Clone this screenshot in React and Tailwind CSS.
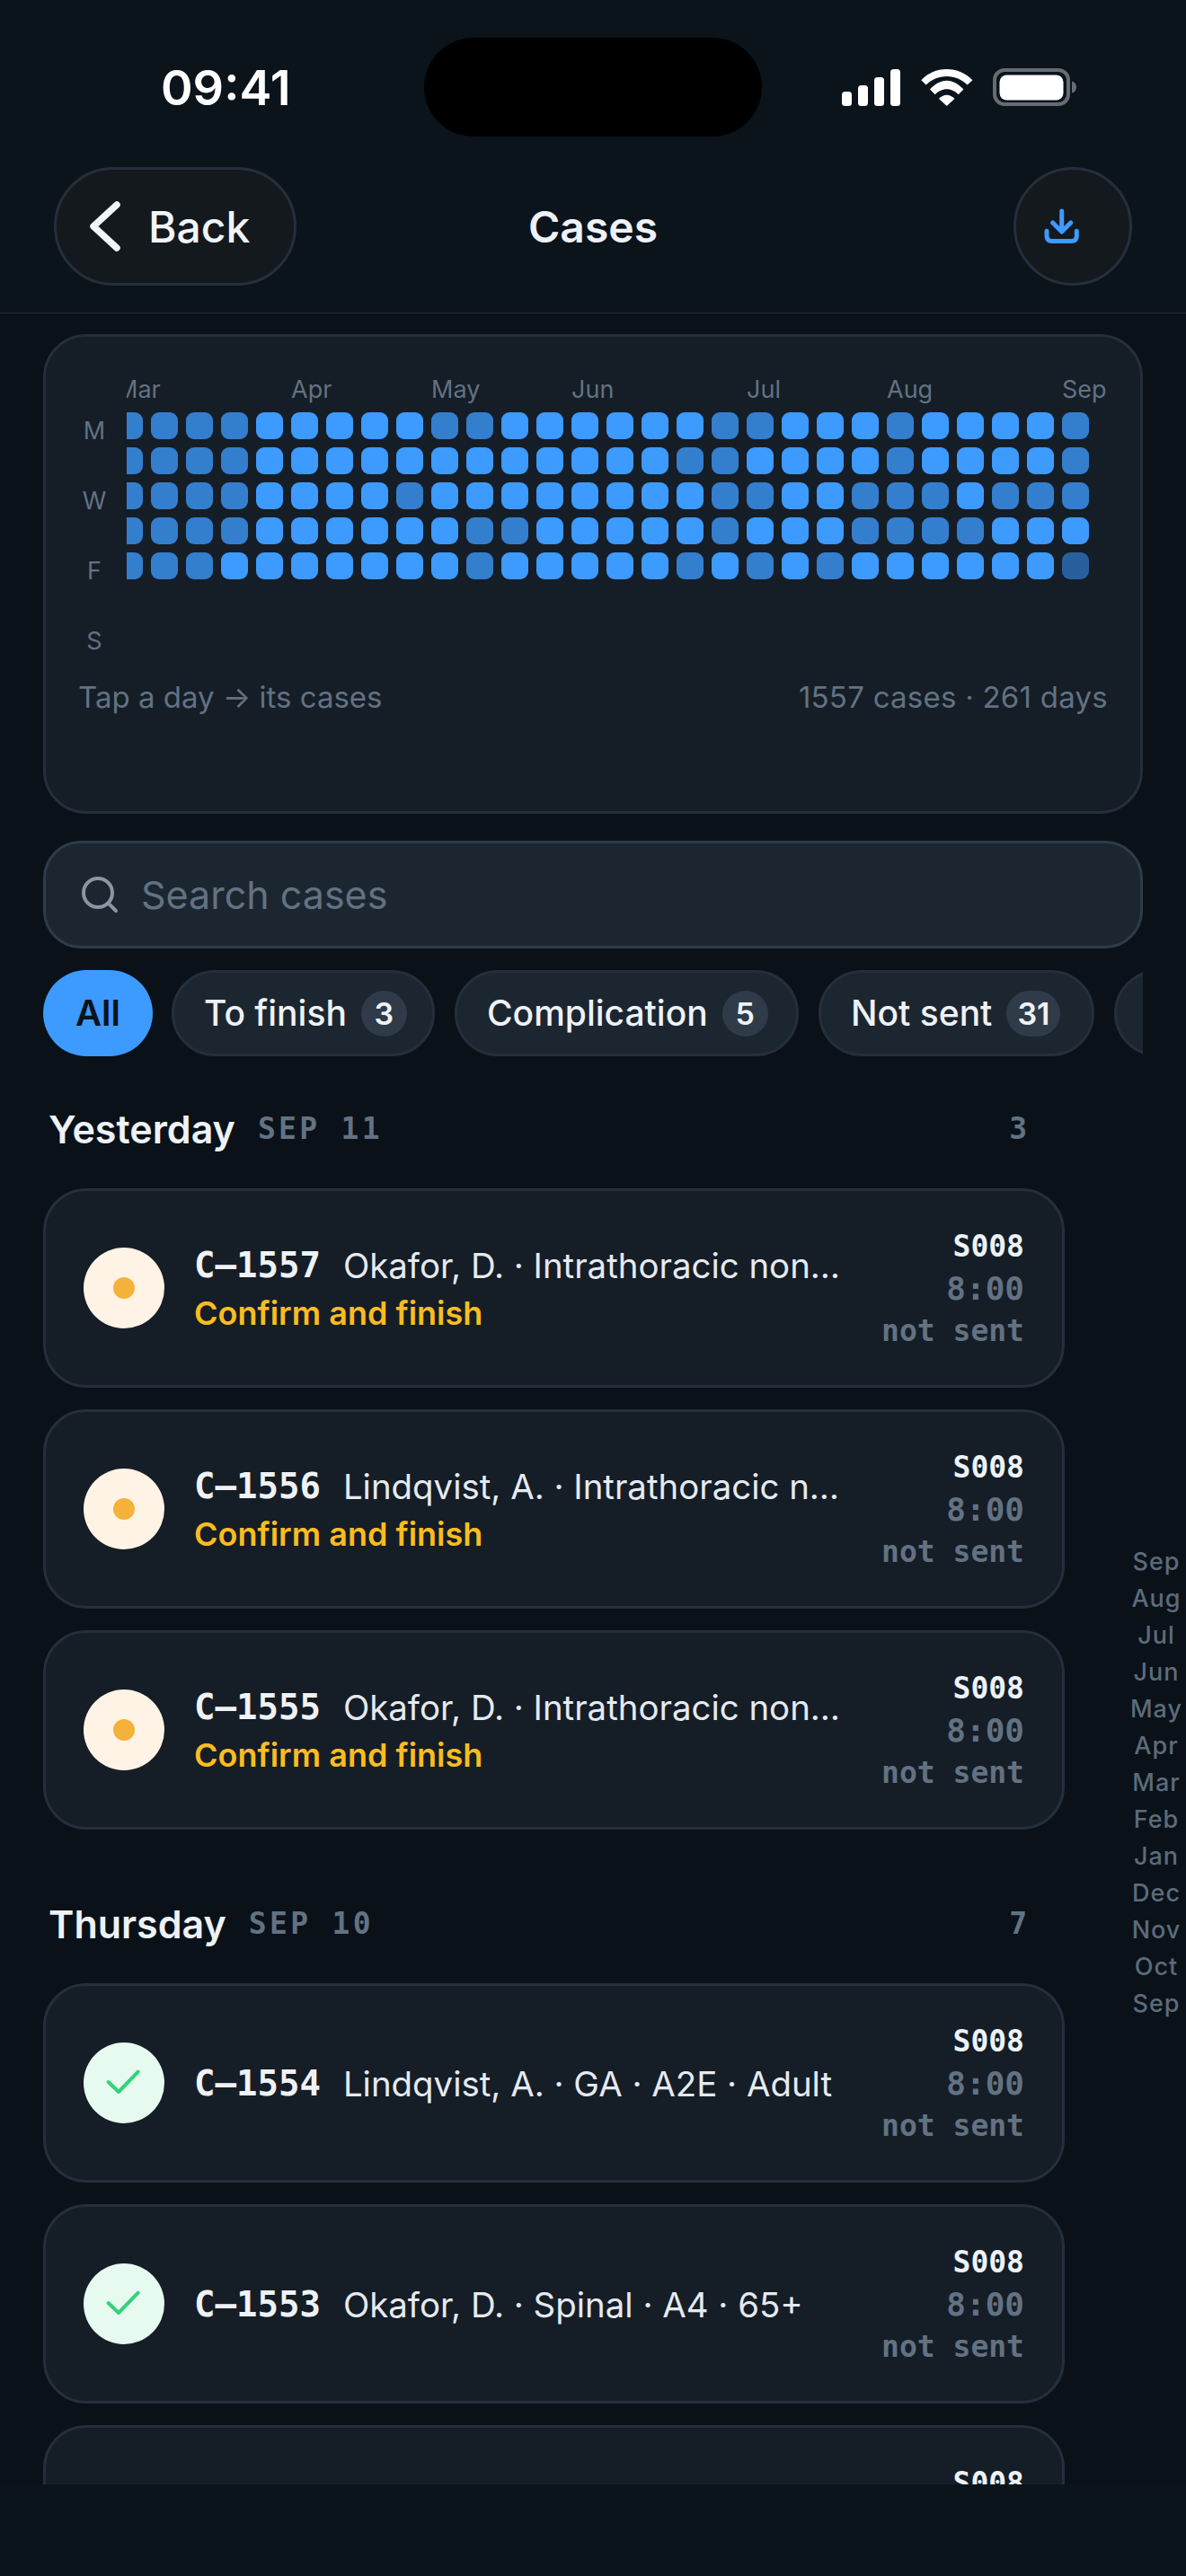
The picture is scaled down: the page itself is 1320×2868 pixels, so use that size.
import { Search } from "lucide-react";

const heat = [
  "MMMMBBBBBMMBBBBBBMMBBBMBBBBM",
  "MMMMBBBBBBBBBBBBMMBBBBMBBBBM",
  "MMMMBBBBMBBBBBBBBMMBBMMMBMMM",
  "MMMMBBBBBBMMBBBBBMBBBMMMMBBB",
  "MMMBBBBBBBMBBBBBMBMBMBBBBBBD",
];

const cellColor = { B: "bg-[#3d9aff]", M: "bg-[#347ece]", D: "bg-[#2a5f9e]" };

// month label -> column it sits over
const months = [
  ["Mar", 0],
  ["Apr", 5],
  ["May", 9],
  ["Jun", 13],
  ["Jul", 18],
  ["Aug", 22],
  ["Sep", 27],
];

const rail = ["Sep", "Aug", "Jul", "Jun", "May", "Apr", "Mar", "Feb", "Jan", "Dec", "Nov", "Oct", "Sep"];

const chips = [
  { label: "To finish", n: 3, w: "w-[293px]" },
  { label: "Complication", n: 5, w: "w-[383px]" },
  { label: "Not sent", n: 31, w: "w-[307px]" },
];

const sections = [
  {
    title: "Yesterday",
    date: "SEP 11",
    count: 3,
    cases: [
      { id: "C–1557", text: "Okafor, D. · Intrathoracic non…", todo: true },
      { id: "C–1556", text: "Lindqvist, A. · Intrathoracic n…", todo: true },
      { id: "C–1555", text: "Okafor, D. · Intrathoracic non…", todo: true },
    ],
  },
  {
    title: "Thursday",
    date: "SEP 10",
    count: 7,
    cases: [
      { id: "C–1554", text: "Lindqvist, A. · GA · A2E · Adult" },
      { id: "C–1553", text: "Okafor, D. · Spinal · A4 · 65+" },
      { id: "", text: "" }, // only its top edge is on screen
    ],
  },
];

function StatusIcons() {
  return (
    <div className="flex items-center">
      <svg width="65" height="41" viewBox="0 0 65 41" fill="#fff">
        <rect x="0" y="25" width="11" height="16" rx="3.5" />
        <rect x="18" y="18" width="11" height="23" rx="3.5" />
        <rect x="36" y="9" width="11" height="32" rx="3.5" />
        <rect x="54" y="0" width="11" height="41" rx="3.5" />
      </svg>
      <svg className="ml-[23px]" width="58" height="41" viewBox="0 0 58 41" fill="#fff">
        <path d="M0.3 12.3C7.5 4.5 17.5 0 28.7 0s21.3 4.5 28.7 12.3l-5.7 5.3C45.7 11.5 37.6 8 28.7 8S11.6 11.5 5.6 17.6z" />
        <path d="M10 22.5C15 17 21.5 12.7 28.7 12.7s13.7 4.3 18.7 9.8l-5.7 5.8c-3.4-3.6-8-6-13-6s-9.6 2.4-13 6z" />
        <path d="M20 33c2.2-2.4 5.4-4.2 8.7-4.2s6.5 1.8 8.7 4.2l-8.7 8z" />
      </svg>
      <svg className="ml-[22px]" width="93" height="42" viewBox="0 0 93 42">
        <rect x="2" y="2" width="82" height="38" rx="11" fill="none" stroke="#666c73" strokeWidth="4" />
        <rect x="7.5" y="7.5" width="71" height="28" rx="8" fill="#fff" />
        <path d="M88 14.5c3 .6 5 3.3 5 6.5s-2 5.900-5 6.500z" fill="#666c73" />
      </svg>
    </div>
  );
}

function Heatmap() {
  return (
    <div className="rounded-[48px] border-[3px] border-[#252f3b] bg-[#151d27] px-[36px] pt-[36px] h-[534px]">
      <div className="flex">
        <div className="w-[36px] mr-[18px] pt-[50px] shrink-0">
          {["M", "", "W", "", "F", "", "S"].map((d, i) => (
            <div key={i} className="h-[39px] flex items-center justify-center text-[27px] text-[#627282]">
              {d}
            </div>
          ))}
        </div>
        <div className="flex-1 min-w-0 overflow-hidden">
          <div className="-ml-[12px] w-[1092px]">
            <div className="flex h-[39px] mb-[9px] items-center relative top-[3px]">
              {heat[0].split("").map((_, c) => {
                const m = months.find((x) => x[1] === c);
                return (
                  <div key={c} className="w-[39px] shrink-0 whitespace-nowrap text-[27px] leading-[39px] text-[#627282]">
                    {m ? m[0] : ""}
                  </div>
                );
              })}
            </div>
            <div className="flex flex-col gap-[9px]">
              {heat.map((row, r) => (
                <div key={r} className="flex gap-[9px]">
                  {row.split("").map((v, c) => (
                    <div key={c} className={"w-[30px] h-[30px] rounded-[9px] shrink-0 " + cellColor[v]} />
                  ))}
                </div>
              ))}
            </div>
          </div>
        </div>
      </div>
      <div className="flex justify-between text-[33px] leading-[48px] text-[#627282] mt-[18px]">
        <span>Tap a day → its cases</span>
        <span className="tracking-[0.25px]">1557 cases · 261 days</span>
      </div>
    </div>
  );
}

function Chip({ label, n, w }) {
  return (
    <div className={"h-[96px] shrink-0 rounded-full border-[3px] border-[#252f3b] bg-[#1c2630] pl-[33px] mr-[22px] flex items-center text-[#eef2f6] text-[39px] font-medium " + w}>
      <span className="mr-[16px]">{label}</span>
      <span className="h-[51px] min-w-[51px] px-[12px] rounded-full bg-[#2f3b49] flex items-center justify-center text-[34px] font-semibold">
        {n}
      </span>
    </div>
  );
}

function CaseRow({ id, text, todo }) {
  return (
    <div className="h-[222px] rounded-[48px] border-[3px] border-[#252f3b] bg-[#151d27] px-[42px] flex items-center">
      {todo ? (
        <div className="w-[90px] h-[90px] rounded-full bg-[#fff3e6] flex items-center justify-center shrink-0">
          <div className="w-[24px] h-[24px] rounded-full bg-[#f5b23a]" />
        </div>
      ) : (
        <div className="w-[90px] h-[90px] rounded-full bg-[#e7faef] shrink-0">
          <svg width="90" height="90" viewBox="0 0 90 90" fill="none">
            <path d="M27.6 44 39 55 60.700 32.700" stroke="#34d27b" strokeWidth="4" strokeLinecap="round" strokeLinejoin="round" />
          </svg>
        </div>
      )}
      <div className="ml-[33px] flex-1 min-w-0 pt-[3px]">
        <div className="flex items-center h-[52px]">
          <span className="font-['DejaVu_Sans_Mono',monospace] font-bold text-[39px] text-[#eef2f6] shrink-0">{id}</span>
          <span className="ml-[25px] text-[38.4px] text-[#e5eaf0] whitespace-nowrap">{text}</span>
        </div>
        {todo && <div className="h-[52px] leading-[52px] text-[36px] font-semibold text-[#fbbc1f]">Confirm and finish</div>}
      </div>
      <div className="ml-[36px] shrink-0 text-right font-['DejaVu_Sans_Mono',monospace] font-bold">
        <div className="h-[47px] leading-[47px] text-[33px] text-[#eef2f6]">S008</div>
        {id && <div className="h-[47px] leading-[47px] text-[36px] text-[#627282]">8:00</div>}
        {id && <div className="h-[47px] leading-[47px] text-[33px] text-[#627282]">not sent</div>}
        {!id && <div className="h-[94px]" />}
      </div>
    </div>
  );
}

function Section({ title, date, count, cases, className }) {
  return (
    <div className={className}>
      <div className="h-[72px] mb-[30px] pl-[6px] pr-[42px] flex items-center">
        <span className="text-[43px] font-semibold text-[#eef2f6]">{title}</span>
        <span className="ml-[25px] font-['DejaVu_Sans_Mono',monospace] font-bold text-[33px] tracking-[3.3px] text-[#627282]">{date}</span>
        <span className="ml-auto font-['DejaVu_Sans_Mono',monospace] font-bold text-[33px] text-[#627282]">{count}</span>
      </div>
      <div className="flex flex-col gap-[24px]">
        {cases.map((c, i) => (
          <CaseRow key={i} {...c} />
        ))}
      </div>
    </div>
  );
}

export default function App() {
  return (
    <div className="w-[1320px] h-[2868px] overflow-hidden bg-[#0c141b] font-['Inter',sans-serif] text-white">
      <div className="bg-[#0b131b]">
        {/* status bar */}
        <div className="h-[186px] pt-[42px] pl-[179px] pr-[122px] flex items-start">
          <div className="w-[293px] h-[110px] flex items-center text-[54px] font-semibold">09:41</div>
          <div className="w-[376px] h-[110px] rounded-full bg-black" />
          <div className="h-[110px] ml-auto flex items-center">
            <StatusIcons />
          </div>
        </div>

        {/* nav */}
        <div className="h-[163px] px-[60px] pb-[31px] border-b border-[#252c36] grid grid-cols-[1fr_auto_1fr] items-center">
          <div className="w-[270px] h-[132px] rounded-full border-[3px] border-[#252f3b] bg-[#14191e] flex items-center pl-[37px]">
            <svg width="34" height="56" viewBox="0 0 34 56" fill="none">
              <path d="M30 4 4 28 30 52" stroke="#f1f5f9" strokeWidth="7.500" strokeLinecap="round" strokeLinejoin="round" />
            </svg>
            <span className="ml-[31px] pt-[2px] text-[48px] font-medium text-[#f1f5f9]">Back</span>
          </div>
          <div className="pt-[2px] text-[48px] font-semibold text-[#eef2f6]">Cases</div>
          <div className="justify-self-end w-[132px] h-[132px] rounded-full border-[3px] border-[#252f3b] bg-[#14191e] flex items-center pl-[27px]">
            <svg width="48" height="48" viewBox="0 0 48 48" fill="none" stroke="#3d9aff" strokeWidth="5" strokeLinecap="round" strokeLinejoin="round">
              <path d="M23.700 7v23M13.700 20l10 10 10-10" />
              <path d="M7 29.300v5.300q0 6 6 6h21.300q6 0 6-6v-5.300" />
            </svg>
          </div>
        </div>
      </div>

      {/* scrolling content */}
      <div className="h-[2417px] overflow-hidden bg-[#0a1119] pl-[48px] pt-[23px]">
        <div className="w-[1224px]">
          <Heatmap />
          <div className="mt-[30px] h-[120px] rounded-[42px] border-[3px] border-[#2f3b49] bg-[#1c2630] flex items-center pl-[36px]">
            <Search size={48} strokeWidth={2} className="text-[#8a96a3]" />
            <span className="ml-[22px] text-[43px] text-[#627282]">Search cases</span>
          </div>
          <div className="mt-[24px] flex overflow-hidden">
            <div className="h-[96px] w-[122px] shrink-0 mr-[21px] rounded-full bg-[#3d9aff] flex items-center justify-center text-[40px] font-semibold text-[#0b131b]">
              All
            </div>
            {chips.map((c) => (
              <Chip key={c.label} {...c} />
            ))}
            <div className="h-[96px] w-[120px] shrink-0 rounded-full border-[3px] border-[#252f3b] bg-[#1c2630]" />
          </div>
        </div>

        <div className="mt-[45px] flex items-start">
          <div className="w-[1137px] shrink-0">
            {sections.map((s, i) => (
              <Section key={s.title} {...s} className={i > 0 ? "mt-[69px]" : ""} />
            ))}
          </div>
          <div className="w-[135px] pl-[69px] mt-[497px] flex flex-col items-center text-[27px] font-medium tracking-[1px] text-[#5c6b7a]">
            {rail.map((m, i) => (
              <div key={i} className="h-[41px] leading-[41px]">
                {m}
              </div>
            ))}
          </div>
        </div>
      </div>
    </div>
  );
}
